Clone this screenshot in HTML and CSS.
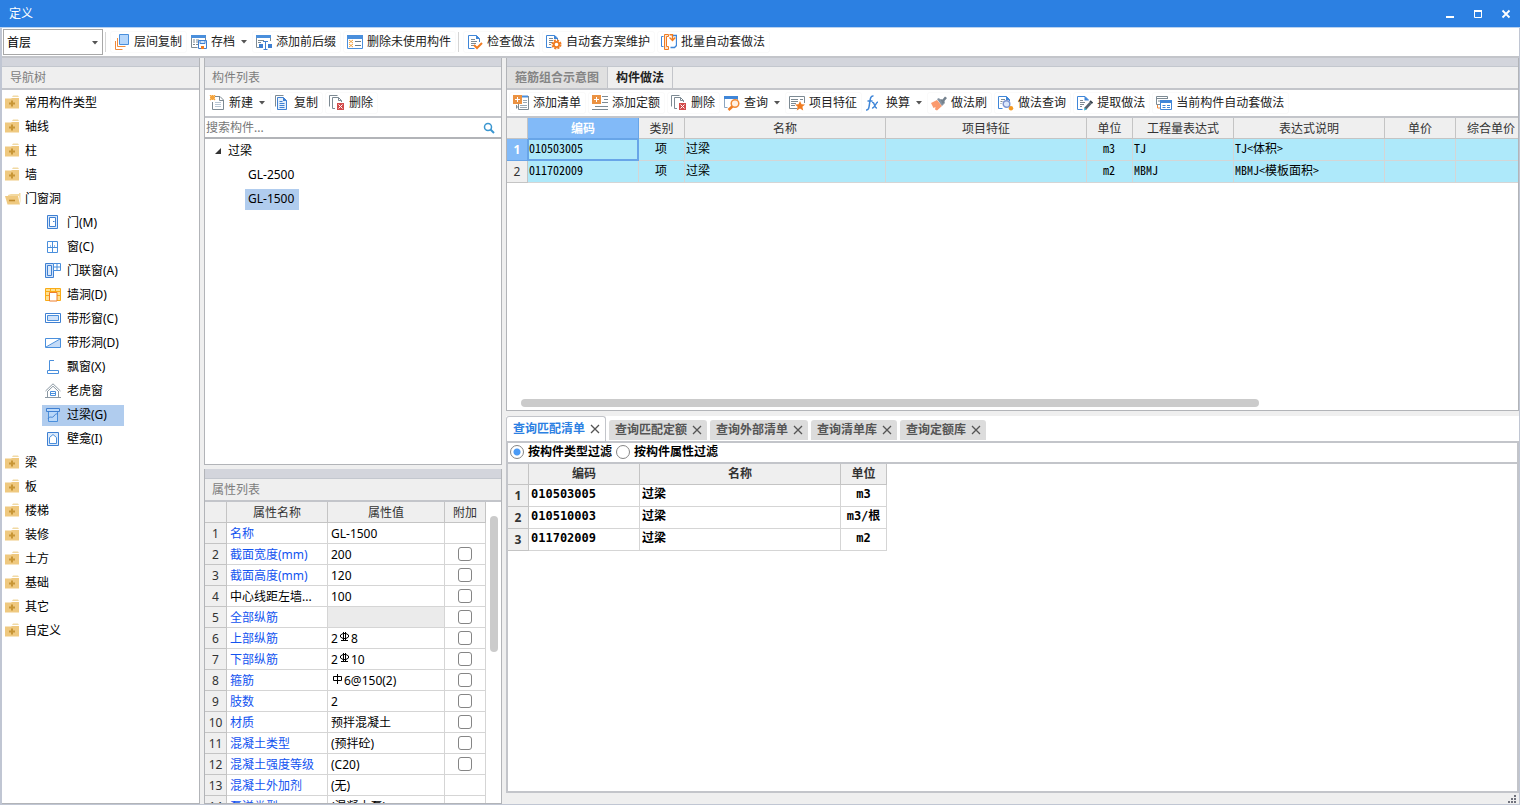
FILE: index.html
```html
<!DOCTYPE html>
<html lang="zh-CN">
<head>
<meta charset="utf-8">
<title>定义</title>
<link rel="stylesheet" href="styles.css">
</head>
<body>
<svg class="sprite" aria-hidden="true">
  <symbol id="i-layers" viewBox="0 0 16 16"><path d="M5.500 .5h9v10h-9z" fill="#b5d6fb" stroke="#4a8fdc"/><path d="M3.500 4v8.500h8M1.500 7v8.500h7" fill="none" stroke="#f08a3c"/></symbol>
  <symbol id="i-archive" viewBox="0 0 16 16"><path d="M.5 3v10.500h6M14.500 3v3" fill="none" stroke="#7d8a93"/><path d="M0 1h15v3H0z" fill="#4a8fdc"/><path d="M2 6h2M5 6h3M2 8h2M5 8h2M2 10.500h2M5 10.500h2" stroke="#7d8a93"/><path d="M7.500 6.500h8v8h-8z" fill="#fff" stroke="#3f80d2"/><path d="M9 6.500h5v3H9z" fill="#cfe3fa" stroke="#3f80d2"/><path d="M10 12h3v3h-3z" fill="#f07c22"/></symbol>
  <symbol id="i-affix" viewBox="0 0 16 16"><path d="M.5 3v10.500h3M14.500 3v4" fill="none" stroke="#7d8a93"/><path d="M0 1h15v3H0z" fill="#4a8fdc"/><path d="M2 6.500h6M2 8.500h3" stroke="#7d8a93"/><path d="M3 10h4v4H3zM12 10h4v4h-4z" fill="#3f80d2"/><path d="M7 7.500h5M9.500 7.500v8M7.500 15.500h4" stroke="#3f80d2" fill="none"/></symbol>
  <symbol id="i-clean" viewBox="0 0 16 16"><path d="M.5 1.500h15v13H.5z" fill="#fff" stroke="#4a8fdc"/><path d="M0 1h16v4H0z" fill="#4a8fdc"/><path d="M8 7.500h6M8 11.500h6" stroke="#6b7b86"/><path d="M2 6l4 3M6 6L2 9M2 10l4 3M6 10l-4 3" stroke="#f2a13c"/></symbol>
  <symbol id="i-check" viewBox="0 0 16 16"><path d="M12.500 8V4.500l-3-3h-8v13h6" fill="#fff" stroke="#3f86d8"/><path d="M9 1v4h4z" fill="#3f86d8"/><path d="M4 5.500h4M4 7.500h6M4 9.500h5M4 11.500h3" stroke="#7d8a93"/><path d="M7 11l3 3 5-5" fill="none" stroke="#f07c22" stroke-width="2"/></symbol>
  <symbol id="i-docgear" viewBox="0 0 16 16"><path d="M11.500 6V4l-3-2.500h-8v12h5" fill="#fff" stroke="#3f86d8"/><path d="M8 1v4h4z" fill="#3f86d8"/><path d="M3 4.500h4M3 6.500h4M3 8.500h3M3 10.500h2" stroke="#7d8a93"/><circle cx="10.500" cy="10.500" r="4" fill="none" stroke="#f07c22" stroke-width="2" stroke-dasharray="2 1.140"/><circle cx="10.500" cy="10.500" r="2.700" fill="#fff" stroke="#f07c22" stroke-width="1.800"/></symbol>
  <symbol id="i-batch" viewBox="0 0 16 16"><path d="M2.500 2.500h-2v10h2" fill="none" stroke="#3f86d8"/><path d="M12 1.500h3.500v10l-2 2h-4" fill="none" stroke="#3f86d8" stroke-width="1.300"/><path d="M3.500 .5h4v2h-2v10h2v3h-4z" fill="#fde3cd" stroke="#f07c22"/><path d="M8.500.8h3v5M8.500 3.500l3 3 2.800-3" fill="none" stroke="#f07c22" stroke-width="1.400"/></symbol>
  <symbol id="i-new" viewBox="0 0 16 16"><path d="M6 1.500h5l3.500 3.500v9.500h-11V7" fill="#fff" stroke="#7d8a93"/><path d="M10.500 1.500v4h4" fill="none" stroke="#7d8a93"/><path d="M6 7.500h6M6 9.500h6M6 11.500h6" stroke="#b8c6d3"/><path d="M1 0l5 5M6 0L1 5M3.500 0v5M1 2.500h5" stroke="#f5a33a" stroke-width="1.300"/></symbol>
  <symbol id="i-copy" viewBox="0 0 16 16"><path d="M1.500 11.500v-11h8" fill="none" stroke="#7d8a93"/><path d="M3.500 2.500h6l3 3v9h-9z" fill="#e3effc" stroke="#3f80d2"/><path d="M9 2v4h4z" fill="#3f80d2"/><path d="M5.500 6.500h3M5.500 8.500h5M5.500 10.500h5M5.500 12.500h5" stroke="#3f80d2"/></symbol>
  <symbol id="i-del" viewBox="0 0 16 16"><path d="M.5 11.500V.5h8M6 13.500H3.500v-11h6l3 3V7" fill="none" stroke="#7d8a93"/><path d="M9.500 2.500v3h3" fill="none" stroke="#7d8a93"/><path d="M8 8h7v7H8z" fill="#d24b4b"/><path d="M9.500 9.500l4 4M13.500 9.500l-4 4" stroke="#fff"/></symbol>
  <symbol id="i-addlist" viewBox="0 0 16 16"><path d="M9 .500h6v2H9z" fill="#4a8fdc"/><path d="M3.500 10v3.500M5.500 9v5.500h10V1M3.500 12h2" fill="none" stroke="#7d8a93"/><path d="M10 5.500h4M10 7.500h4M7 10.500h7M7 12.500h7" stroke="#9aa8b2"/><path d="M0 0h9v9H0z" fill="#eb9242"/><path d="M4.500 2v5M2 4.500h5" stroke="#fff"/></symbol>
  <symbol id="i-addquota" viewBox="0 0 16 16"><path d="M10 1.500h6M12 4.500h4M10 7.500h6M3 11.500h13M0 14.500h16" stroke="#7d8a93"/><path d="M0 0h9v9H0z" fill="#eb9242"/><path d="M4.500 2v5M2 4.500h5" stroke="#fff"/></symbol>
  <symbol id="i-query" viewBox="0 0 16 16"><path d="M.5 2v10.500h3M13.500 2v3" fill="none" stroke="#8aa5c0"/><path d="M0 1h14v3H0z" fill="#3f86d8"/><circle cx="11" cy="8.500" r="3.800" fill="#fff0e2" stroke="#f28a35" stroke-width="1.500"/><path d="M8.300 11.500L4.500 15" stroke="#f07c22" stroke-width="2.600"/></symbol>
  <symbol id="i-feature" viewBox="0 0 16 16"><path d="M8 13.500H.500v-12h15V8" fill="#fff" stroke="#7d8a93"/><path d="M2 4.500h7M2 6.500h7M2 8.500h5M2 10.500h4M11 4.500h3" stroke="#7d8a93"/><path d="M11 6l1.500 3.200 3.500.4-2.600 2.200.8 3.700L11 13.600l-3.200 1.900.8-3.700L6 9.600l3.500-.4z" fill="#f07c22"/></symbol>
  <symbol id="i-fx" viewBox="0 0 16 16"><path d="M0 15c3 .5 3-3 3.600-7C4.200 4 4.600.500 7.500 1M1.500 6h5" fill="none" stroke="#3f86d8" stroke-width="1.500"/><path d="M6 7.500c3-1 2 6 5 5.500M12 7c-2 0-3.500 6.500-6 6" fill="none" stroke="#3f86d8" stroke-width="1.400"/></symbol>
  <symbol id="i-brush" viewBox="0 0 16 16"><path d="M0 8l6-3 5 6-5 4.500-2-1 .5-2.500-2 1z" fill="#fb9b6f"/><path d="M6 4l2-1 5 6-2 2z" fill="#8592a0"/><path d="M9 4l2.500.5L14 1.500l2 1.500-2.500 3 .3 2.500-2.300.2z" fill="#74818d"/></symbol>
  <symbol id="i-docquery" viewBox="0 0 16 16"><path d="M11.500 6V4.500l-3-3h-8v12h4" fill="#fff" stroke="#3f86d8"/><path d="M8 1v4h4z" fill="#3f86d8"/><path d="M3 4.500h4M2.500 6.500h2M2.500 8.500h1" stroke="#7d8a93"/><circle cx="8.500" cy="9" r="3.300" fill="#dce7fb" stroke="#7b93cf" stroke-width="1.400"/><path d="M11 11.500l1.500 1" stroke="#7b93cf" stroke-width="1.500"/><circle cx="13" cy="13.300" r="2.200" fill="#f59a22"/></symbol>
  <symbol id="i-extract" viewBox="0 0 16 16"><path d="M11.500 5l-3.500-3.500H.500v13h5" fill="#fff" stroke="#3f86d8"/><path d="M7.500 1v4.500H12z" fill="#3f86d8"/><path d="M3 5.500h3M3 7.500h5M3 9.500h4M3 11.500h2" stroke="#7d8a93"/><path d="M8 14l5.500-6" stroke="#56636e" stroke-width="2.600"/><path d="M13 6l2.500 2.300" stroke="#34404a" stroke-width="2"/><path d="M7 15.500l.7-3 2 2z" fill="#35b6cf"/></symbol>
  <symbol id="i-auto" viewBox="0 0 16 16"><path d="M4 9.500H.500v-8h11V4M.500 3.500h11M2 6h2" fill="none" stroke="#7d8a93"/><path d="M1.500 10v3H4" fill="none" stroke="#f08a3c"/><path d="M4.500 5.500h11v9h-11z" fill="#fff" stroke="#3f86d8"/><path d="M4 5h12v3H4z" fill="#3f86d8"/><path d="M6.500 10.500h3M11 10.500h3M6.500 12.500h3M11 12.500h3" stroke="#3f86d8"/></symbol>
  <symbol id="i-folder" viewBox="0 0 16 16"><path d="M8 .500h5l1 1.500H7z" fill="#f1d9a3"/><path d="M0 3.500h6l1-.5h7v10.500H0z" fill="#efc980"/><path d="M7 5.500v6M4 8.500h6" stroke="#c89636" stroke-width="2"/></symbol>
  <symbol id="i-open" viewBox="0 0 16 16"><path d="M3 4l3-1h8V2h1.500v10.500L14 5H3z" fill="#f3d9a0"/><path d="M0 5h13l2 8.500H2.500z" fill="#efc980"/><path d="M4 9.500h6" stroke="#c08a2c" stroke-width="1.600"/></symbol>
  <symbol id="i-door" viewBox="0 0 16 16"><path d="M2.500 .5h10v13h-10z" fill="#dceafb" stroke="#3f80d2"/><path d="M4.500 2.500h6v9h-6z" fill="#fff" stroke="#3f80d2"/><path d="M8 6.500h1.500" stroke="#3f80d2"/></symbol>
  <symbol id="i-window" viewBox="0 0 16 16"><path d="M2.500 2.500h10v11h-10zM7.500 2.500v11M2.500 8.500h10" fill="#fff" stroke="#4a8fdc"/><path d="M5 7h1M9 7h1" stroke="#3f80d2"/></symbol>
  <symbol id="i-doorwin" viewBox="0 0 16 16"><path d="M.500 .500h8v14h-8z" fill="#cfe2fa" stroke="#3f80d2"/><path d="M2.500 2.500h4v10h-4z" fill="#dceafb" stroke="#3f80d2"/><path d="M8.500 .500h7v7h-7zM12 .500v7M8.500 4h7" fill="#fff" stroke="#4a8fdc"/></symbol>
  <symbol id="i-hole" viewBox="0 0 16 16"><path d="M.500 1.500h15v12h-15z" fill="#ffe08f" stroke="#f9ab16"/><path d="M0 4.500h16M0 8.500h4M12 8.500h4M5.500 1v3M10.500 1v3" stroke="#f9ab16"/><path d="M4.500 5.500h7.500v8.500H4.500z" fill="#fff" stroke="#ee7f2c"/></symbol>
  <symbol id="i-strip" viewBox="0 0 16 16"><path d="M.500 2.500h15v9h-15z" fill="#fff" stroke="#3f80d2"/><path d="M2.500 4.500h11v5h-11z" fill="#cfe2fa" stroke="#4a8fdc"/></symbol>
  <symbol id="i-striphole" viewBox="0 0 16 16"><path d="M.500 3.500h15v9h-15z" fill="#fff"/><path d="M15 4v8.500H1z" fill="#c4dbf7"/><path d="M.500 3.500h15v9h-15zM1 12L15 4" fill="none" stroke="#4a8fdc"/></symbol>
  <symbol id="i-bay" viewBox="0 0 16 16"><path d="M9 1.500H4.500v10M2.500 11.500h11v3h-11z" fill="none" stroke="#4a8fdc"/></symbol>
  <symbol id="i-dormer" viewBox="0 0 16 16"><path d="M.500 8L8 .800 15.500 8M3 8L8 3.200 13 8M2.500 8v6.500M13.500 8v6.500M0 14.500h16" fill="none" stroke="#8b98a3"/><path d="M5.500 8.500h5v4h-5zM5.500 10.500h5" fill="#fff" stroke="#4a8fdc"/></symbol>
  <symbol id="i-lintel" viewBox="0 0 16 16"><path d="M3.500 4.500h9v10h-9z" fill="#b9d8fa" stroke="#4a8fdc"/><path d="M1.500 1.500h13v3h-13z" fill="#b9d8fa" stroke="#3f80d2"/><path d="M3 12c2-4 4 0 6-3s3-2 4-2" fill="none" stroke="#3f80d2"/></symbol>
  <symbol id="i-niche" viewBox="0 0 16 16"><path d="M2.500 1.500h11v13h-11z" fill="#dceafb" stroke="#3f80d2"/><path d="M4.500 12.500V6.500L8 3.500l3.500 3v6z" fill="#fff" stroke="#4a8fdc"/></symbol>
  <symbol id="i-x" viewBox="0 0 10 10"><path d="M1 1l8 8M9 1L1 9" stroke="currentColor" stroke-width="1.300"/></symbol>
  <symbol id="i-arrow" viewBox="0 0 6 4"><path d="M0 0h6L3 3.500z" fill="#555"/></symbol>
  <symbol id="i-rebar3" viewBox="0 0 11 11"><path d="M4 1.500h3L9.500 3v2L7 6.500H4L1.500 5V3zM4.500 0v9M6.500 0v9M2 8.500h7" fill="none" stroke="#000"/></symbol>
  <symbol id="i-rebar1" viewBox="0 0 11 11"><path d="M1.500 2.500h8v4h-8zM5.500 0v10" fill="none" stroke="#000"/></symbol>
</svg>

<header class="titlebar">
  <span class="title">定义</span>
  <div class="winbtns">
    <button aria-label="最小化"><svg viewBox="0 0 10 10"><path d="M1 8h8" stroke="#fff" stroke-width="2"/></svg></button>
    <button aria-label="最大化"><svg viewBox="0 0 10 10"><path d="M1.500 2h7v6.500h-7z" fill="none" stroke="#fff"/><path d="M1 2h8" stroke="#fff" stroke-width="2"/></svg></button>
    <button aria-label="关闭"><svg viewBox="0 0 10 10"><path d="M1.500 1.500l7 7M8.500 1.500l-7 7" stroke="#fff" stroke-width="1.800"/></svg></button>
  </div>
</header>

<div class="window">
  <div class="toolbar main-toolbar">
    <label class="combo"><select aria-label="楼层"><option>首层</option></select><svg class="arrow"><use href="#i-arrow"/></svg></label>
    <i class="sep"></i>
    <button class="tool"><svg><use href="#i-layers"/></svg>层间复制</button>
    <button class="tool drop"><svg><use href="#i-archive"/></svg>存档<svg class="arrow"><use href="#i-arrow"/></svg></button>
    <button class="tool"><svg><use href="#i-affix"/></svg>添加前后缀</button>
    <button class="tool"><svg><use href="#i-clean"/></svg>删除未使用构件</button>
    <i class="sep"></i>
    <button class="tool"><svg><use href="#i-check"/></svg>检查做法</button>
    <button class="tool"><svg><use href="#i-docgear"/></svg>自动套方案维护</button>
    <button class="tool"><svg><use href="#i-batch"/></svg>批量自动套做法</button>
  </div>

  <div class="columns">
    <nav class="panel nav-panel">
      <div class="band"></div>
      <h2 class="panel-title">导航树</h2>
      <ul class="tree">
        <li><svg><use href="#i-folder"/></svg>常用构件类型</li>
        <li><svg><use href="#i-folder"/></svg>轴线</li>
        <li><svg><use href="#i-folder"/></svg>柱</li>
        <li><svg><use href="#i-folder"/></svg>墙</li>
        <li><svg><use href="#i-open"/></svg>门窗洞</li>
        <li class="child"><span><svg><use href="#i-door"/></svg>门(M)</span></li>
        <li class="child"><span><svg><use href="#i-window"/></svg>窗(C)</span></li>
        <li class="child"><span><svg><use href="#i-doorwin"/></svg>门联窗(A)</span></li>
        <li class="child"><span><svg><use href="#i-hole"/></svg>墙洞(D)</span></li>
        <li class="child"><span><svg><use href="#i-strip"/></svg>带形窗(C)</span></li>
        <li class="child"><span><svg><use href="#i-striphole"/></svg>带形洞(D)</span></li>
        <li class="child"><span><svg><use href="#i-bay"/></svg>飘窗(X)</span></li>
        <li class="child"><span><svg><use href="#i-dormer"/></svg>老虎窗</span></li>
        <li class="child"><span class="selected"><svg><use href="#i-lintel"/></svg>过梁(G)</span></li>
        <li class="child"><span><svg><use href="#i-niche"/></svg>壁龛(I)</span></li>
        <li><svg><use href="#i-folder"/></svg>梁</li>
        <li><svg><use href="#i-folder"/></svg>板</li>
        <li><svg><use href="#i-folder"/></svg>楼梯</li>
        <li><svg><use href="#i-folder"/></svg>装修</li>
        <li><svg><use href="#i-folder"/></svg>土方</li>
        <li><svg><use href="#i-folder"/></svg>基础</li>
        <li><svg><use href="#i-folder"/></svg>其它</li>
        <li><svg><use href="#i-folder"/></svg>自定义</li>
      </ul>
    </nav>

    <div class="middle">
      <section class="panel list-panel">
        <div class="band"></div>
        <h2 class="panel-title">构件列表</h2>
        <div class="toolbar">
          <button class="tool drop"><svg><use href="#i-new"/></svg>新建<svg class="arrow"><use href="#i-arrow"/></svg></button>
          <button class="tool"><svg><use href="#i-copy"/></svg>复制</button>
          <button class="tool"><svg><use href="#i-del"/></svg>删除</button>
        </div>
        <div class="search">
          <input type="text" placeholder="搜索构件..." aria-label="搜索构件">
          <svg viewBox="0 0 12 12"><circle cx="5" cy="5" r="3.500" fill="none" stroke="#3a96d0" stroke-width="1.500"/><path d="M7.500 7.500L11 11" stroke="#3a96d0" stroke-width="2"/></svg>
        </div>
        <ul class="components">
          <li class="group"><svg viewBox="0 0 8 8"><path d="M7 1v6H1z" fill="#333"/></svg>过梁</li>
          <li><span>GL-2500</span></li>
          <li><span class="selected">GL-1500</span></li>
        </ul>
      </section>

      <section class="panel props-panel">
        <div class="band"></div>
        <h2 class="panel-title">属性列表</h2>
        <div class="props-body">
          <table class="grid props">
            <colgroup><col class="w-22"><col class="w-101"><col class="w-117"><col class="w-41"></colgroup>
            <thead><tr><th></th><th>属性名称</th><th>属性值</th><th>附加</th></tr></thead>
            <tbody>
              <tr><th>1</th><td class="key">名称</td><td>GL-1500</td><td></td></tr>
              <tr><th>2</th><td class="key">截面宽度(mm)</td><td>200</td><td><input type="checkbox" aria-label="附加 截面宽度"></td></tr>
              <tr><th>3</th><td class="key">截面高度(mm)</td><td>120</td><td><input type="checkbox" aria-label="附加 截面高度"></td></tr>
              <tr><th>4</th><td>中心线距左墙...</td><td>100</td><td><input type="checkbox" aria-label="附加 中心线距左墙"></td></tr>
              <tr><th>5</th><td class="key">全部纵筋</td><td class="off"></td><td><input type="checkbox" aria-label="附加 全部纵筋"></td></tr>
              <tr><th>6</th><td class="key">上部纵筋</td><td>2<svg><use href="#i-rebar3"/></svg>8</td><td><input type="checkbox" aria-label="附加 上部纵筋"></td></tr>
              <tr><th>7</th><td class="key">下部纵筋</td><td>2<svg><use href="#i-rebar3"/></svg>10</td><td><input type="checkbox" aria-label="附加 下部纵筋"></td></tr>
              <tr><th>8</th><td class="key">箍筋</td><td><svg><use href="#i-rebar1"/></svg>6@150(2)</td><td><input type="checkbox" aria-label="附加 箍筋"></td></tr>
              <tr><th>9</th><td class="key">肢数</td><td>2</td><td><input type="checkbox" aria-label="附加 肢数"></td></tr>
              <tr><th>10</th><td class="key">材质</td><td>预拌混凝土</td><td><input type="checkbox" aria-label="附加 材质"></td></tr>
              <tr><th>11</th><td class="key">混凝土类型</td><td>(预拌砼)</td><td><input type="checkbox" aria-label="附加 混凝土类型"></td></tr>
              <tr><th>12</th><td class="key">混凝土强度等级</td><td>(C20)</td><td><input type="checkbox" aria-label="附加 混凝土强度等级"></td></tr>
              <tr><th>13</th><td class="key">混凝土外加剂</td><td>(无)</td><td></td></tr>
              <tr><th>14</th><td class="key">泵送类型</td><td>(混凝土泵)</td><td></td></tr>
            </tbody>
          </table>
          <div class="vscroll"><div class="thumb"></div></div>
        </div>
      </section>
    </div>

    <main class="right">
      <section class="panel method-panel">
        <div class="band"></div>
        <div class="top-tabs" role="tablist">
          <button role="tab" aria-selected="false">箍筋组合示意图</button>
          <button role="tab" aria-selected="true">构件做法</button>
        </div>
        <div class="toolbar">
          <button class="tool"><svg><use href="#i-addlist"/></svg>添加清单</button>
          <button class="tool"><svg><use href="#i-addquota"/></svg>添加定额</button>
          <button class="tool"><svg><use href="#i-del"/></svg>删除</button>
          <button class="tool drop"><svg><use href="#i-query"/></svg>查询<svg class="arrow"><use href="#i-arrow"/></svg></button>
          <button class="tool"><svg><use href="#i-feature"/></svg>项目特征</button>
          <button class="tool drop"><svg><use href="#i-fx"/></svg>换算<svg class="arrow"><use href="#i-arrow"/></svg></button>
          <button class="tool"><svg><use href="#i-brush"/></svg>做法刷</button>
          <button class="tool"><svg><use href="#i-docquery"/></svg>做法查询</button>
          <button class="tool"><svg><use href="#i-extract"/></svg>提取做法</button>
          <button class="tool"><svg><use href="#i-auto"/></svg>当前构件自动套做法</button>
        </div>
        <div class="method-body">
          <table class="grid methods">
            <colgroup><col class="w-21"><col class="w-111"><col class="w-46"><col class="w-201"><col class="w-201"><col class="w-46"><col class="w-101"><col class="w-151"><col class="w-71"><col class="w-71"></colgroup>
            <thead><tr><th></th><th class="current">编码</th><th>类别</th><th>名称</th><th>项目特征</th><th>单位</th><th>工程量表达式</th><th>表达式说明</th><th>单价</th><th>综合单价</th></tr></thead>
            <tbody>
              <tr><th class="current">1</th><td class="focus">010503005</td><td class="mid">项</td><td>过梁</td><td></td><td class="mid">m3</td><td>TJ</td><td>TJ&lt;体积&gt;</td><td></td><td></td></tr>
              <tr><th>2</th><td>011702009</td><td class="mid">项</td><td>过梁</td><td></td><td class="mid">m2</td><td>MBMJ</td><td>MBMJ&lt;模板面积&gt;</td><td></td><td></td></tr>
            </tbody>
          </table>
          <div class="hscroll"><div class="thumb"></div></div>
        </div>
      </section>

      <section class="query-panel">
        <div class="query-tabs" role="tablist">
          <div class="qtab active" role="tab" aria-selected="true">查询匹配清单<button aria-label="关闭查询匹配清单"><svg><use href="#i-x"/></svg></button></div>
          <div class="qtab" role="tab">查询匹配定额<button aria-label="关闭查询匹配定额"><svg><use href="#i-x"/></svg></button></div>
          <div class="qtab" role="tab">查询外部清单<button aria-label="关闭查询外部清单"><svg><use href="#i-x"/></svg></button></div>
          <div class="qtab" role="tab">查询清单库<button aria-label="关闭查询清单库"><svg><use href="#i-x"/></svg></button></div>
          <div class="qtab" role="tab">查询定额库<button aria-label="关闭查询定额库"><svg><use href="#i-x"/></svg></button></div>
        </div>
        <div class="query-body">
          <div class="filters">
            <label><input type="radio" name="filter" checked>按构件类型过滤</label>
            <label><input type="radio" name="filter">按构件属性过滤</label>
          </div>
          <table class="grid matches">
            <colgroup><col class="w-21"><col class="w-111"><col class="w-201"><col class="w-46"></colgroup>
            <thead><tr><th></th><th>编码</th><th>名称</th><th>单位</th></tr></thead>
            <tbody>
              <tr><th>1</th><td>010503005</td><td>过梁</td><td class="mid">m3</td></tr>
              <tr><th>2</th><td>010510003</td><td>过梁</td><td class="mid">m3/根</td></tr>
              <tr><th>3</th><td>011702009</td><td>过梁</td><td class="mid">m2</td></tr>
            </tbody>
          </table>
        </div>
      </section>
      <footer class="status"><svg viewBox="0 0 8 8"><path d="M6 0h2v2H6zM3 3h2v2H3zM6 3h2v2H6zM0 6h2v2H0zM3 6h2v2H3zM6 6h2v2H6z" fill="#70727c"/></svg></footer>
    </main>
  </div>
</div>
</body>
</html>
```
FILE: styles.css
```css
* { box-sizing: border-box; }

body {
  margin: 0;
  height: 100vh;
  display: flex;
  flex-direction: column;
  overflow: hidden;
  background: #efefef;
  color: #000;
  font: 12px/20px "Noto Sans", "Noto Sans CJK SC", sans-serif;
}

button, input, select { font: inherit; color: inherit; }
button { border: 0; padding: 0; background: none; }
ul { list-style: none; margin: 0; padding: 0; }
svg { flex: none; display: block; }
.sprite { position: absolute; width: 0; height: 0; }

/* Title bar */
.titlebar {
  flex: none;
  height: 28px;
  display: flex;
  align-items: center;
  justify-content: space-between;
  padding: 0 9px;
  background: #2c80e2;
  border-bottom: 1px solid #b9d2f0;
  color: #fff;
}
.winbtns { display: flex; gap: 18px; }
.winbtns svg { width: 10px; height: 10px; }

.window {
  flex: 1;
  min-height: 0;
  display: flex;
  flex-direction: column;
  border: solid #c0c6d3;
  border-width: 0 1px 1px 2px;
}

/* Toolbars */
.toolbar {
  flex: none;
  height: 28px;
  display: flex;
  align-items: center;
  gap: 2px;
  padding: 0 2px;
  background: #fff;
  border-bottom: 2px solid #c3c5ca;
  white-space: nowrap;
}
.main-toolbar { height: 30px; padding: 0 1px; }
.tool {
  display: flex;
  align-items: center;
  gap: 4px;
  height: 22px;
  padding: 0 5px 0 4px;
  border-radius: 3px;
  box-shadow: inset 0 0 0 1px #fafafa;
  color: #222;
  line-height: 22px;
}
.tool svg { width: 16px; height: 16px; }
.tool.drop { padding: 0 2px; box-shadow: none; }
.tool .arrow { width: 6px; height: 4px; margin: 0 1px 0 2px; }
.sep { width: 1px; height: 20px; margin-right: 2px; background: #d5d5d5; }
.combo { position: relative; width: 100px; }
.combo select {
  appearance: none;
  display: block;
  width: 100%;
  height: 26px;
  padding: 1px 3px 0;
  border: 1px solid #a8a8a8;
  border-radius: 0;
  background: #fff;
}
.combo .arrow { position: absolute; right: 5px; top: 12px; width: 6px; height: 4px; }

/* Panels */
.columns { flex: 1; min-height: 0; display: flex; gap: 4px; }
.panel {
  display: flex;
  flex-direction: column;
  min-height: 0;
  overflow: hidden;
  background: #fff;
  border: 1px solid #b2b4b8;
  border-top: 0;
}
.band { flex: none; height: 9px; background: #d3d5dc; border-bottom: 1px solid #c3c7ce; }
.panel-title {
  flex: none;
  height: 23px;
  margin: 0;
  padding: 0 7px;
  background: #efefef;
  border-bottom: 2px solid #c3c5ca;
  color: #7d7d7d;
  font-size: 12px;
  font-weight: 400;
  line-height: 21px;
}
.selected { background: #b0ccee; }

/* Navigation tree */
.nav-panel { flex: none; width: 198px; border-left: 0; }
.nav-panel .panel-title { padding: 0 8px; }
.tree { padding-top: 1px; }
.tree li { display: flex; align-items: center; gap: 4px; height: 24px; padding-left: 3px; }
.tree svg { width: 16px; height: 16px; }
.tree .child { padding-left: 40px; }
.tree span { display: flex; align-items: center; gap: 6px; height: 21px; padding: 0 17px 0 3px; }

/* Component list */
.middle { flex: none; width: 298px; display: flex; flex-direction: column; gap: 4px; }
.list-panel { flex: 407 0 0; }
.search {
  flex: none;
  height: 21px;
  display: flex;
  align-items: center;
  padding-right: 6px;
  border-bottom: 2px solid #b2b4b8;
}
.search input { flex: 1; min-width: 0; height: 19px; padding: 0 1px; border: 0; background: none; outline: 0; }
.search input::placeholder { color: #777; }
.search svg { width: 12px; height: 12px; }
.components li { display: flex; align-items: center; height: 24px; padding-left: 40px; }
.components .group { gap: 6px; padding-left: 9px; }
.components svg { width: 8px; height: 8px; }
.components span { height: 21px; padding: 0 5px 0 3px; }

/* Grids */
.grid { border-collapse: separate; border-spacing: 0; table-layout: fixed; width: 0; }
.grid th, .grid td {
  height: 22px;
  padding: 0 2px;
  border: solid #d5d5d5;
  border-width: 0 1px 1px 0;
  text-align: left;
  line-height: 18px;
  white-space: nowrap;
  overflow: hidden;
}
.grid th { padding: 1px 0 0; background: #efefef; border-color: #c4c4c4; color: #333; font-weight: 400; text-align: center; }
.grid thead th { height: 21px; }
.grid .mid { text-align: center; }
.w-21 { width: 21px; }
.w-22 { width: 22px; }
.w-41 { width: 41px; }
.w-46 { width: 46px; }
.w-71 { width: 71px; }
.w-101 { width: 101px; }
.w-111 { width: 111px; }
.w-117 { width: 117px; }
.w-151 { width: 151px; }
.w-201 { width: 201px; }

/* Property grid */
.props-panel { flex: 335 0 0; }
.props-panel .band { height: 10px; }
.props-body { flex: 1; min-height: 0; display: flex; justify-content: space-between; overflow: hidden; }
.grid.props th, .grid.props td { height: 21px; padding: 2px 3px 0; }
.grid.props th { padding: 2px 0 0; }
.grid.props td:last-child { padding: 0; }
.grid.props .key { color: #1253f0; }
.grid.props .off { background: #ebebeb; }
.props td svg { display: inline-block; width: 11px; height: 11px; margin: 0 1px; vertical-align: 0; }
.props input {
  appearance: none;
  display: block;
  width: 14px;
  height: 14px;
  margin: 0 auto;
  border: 1px solid #858585;
  border-radius: 3px;
  background: #fff;
}
.vscroll { padding: 14px 3px 0 0; }
.vscroll .thumb { width: 8px; height: 136px; border-radius: 4px; background: #cbcbcb; }

/* Method panel */
.right { flex: 1; min-width: 0; display: flex; flex-direction: column; }
.method-panel { flex: 352 0 0; }
.top-tabs { flex: none; display: flex; height: 23px; background: #efefef; border-bottom: 2px solid #c3c5ca; }
.top-tabs button {
  padding: 0 8px;
  border-right: 1px solid #c3c5ca;
  background: #e0e0e0;
  color: #858585;
  font-weight: 700;
}
.top-tabs [aria-selected="true"] { background: #efefef; color: #222; }
.method-body { flex: 1; min-height: 0; display: flex; flex-direction: column; justify-content: space-between; overflow: hidden; }
.grid.methods td { padding: 0 2px 3px 1px; background: #aee9fa; font-family: "Noto Sans Mono CJK SC", "Liberation Mono", "Noto Sans CJK SC", monospace; }
.grid .current { background: #82baf8; border-color: #68a5e8; color: #fff; font-weight: 700; }
.grid.methods .focus { box-shadow: inset 0 0 0 1px #68a5e8; border-color: #68a5e8; }
.hscroll { padding: 0 0 3px 14px; }
.hscroll .thumb { width: 74%; height: 8px; border-radius: 4px; background: #cbcbcb; }

/* Query panel */
.query-panel { flex: 378 0 0; min-height: 0; display: flex; flex-direction: column; margin-top: 5px; }
.query-tabs { flex: none; display: flex; align-items: flex-end; gap: 3px; height: 25px; background: #fff; }
.qtab {
  display: flex;
  align-items: center;
  gap: 5px;
  height: 20px;
  margin-bottom: 1px;
  padding: 0 5px 0 6px;
  border-radius: 3px 3px 0 0;
  background: #dcdcdc;
  color: #555;
  font-weight: 700;
}
.qtab.active {
  height: 25px;
  margin: 0;
  border: solid #c3c5ca;
  border-width: 1px 1px 0;
  background: #fff;
  color: #2c80e2;
}
.qtab button { color: #555; }
.qtab svg { width: 10px; height: 10px; }
.query-body { flex: 1; min-height: 0; overflow: hidden; border: 2px solid #c3c5ca; background: #fff; }
.filters { display: flex; gap: 4px; height: 21px; padding-left: 2px; border-bottom: 2px solid #c3c5ca; font-weight: 700; }
.filters label { display: flex; align-items: center; gap: 4px; }
.filters input {
  appearance: none;
  width: 14px;
  height: 14px;
  margin: 0;
  border: 1px solid #858585;
  border-radius: 50%;
  background: #fff;
}
.filters input:checked { background: radial-gradient(circle, #4a9af5 3px, #fff 4px); }
.grid.matches th { font-weight: 700; }
.grid.matches td { padding: 0 2px 2px; font-family: "DejaVu Sans Mono", "Noto Sans CJK SC", monospace; font-weight: 700; }

.status { flex: none; display: flex; justify-content: flex-end; align-items: center; height: 11px; padding-right: 3px; }
.status svg { width: 8px; height: 8px; }
```
